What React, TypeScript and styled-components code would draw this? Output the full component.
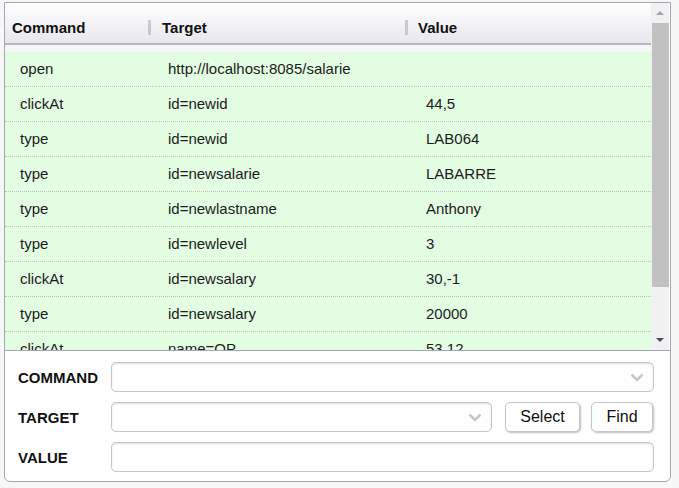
import React from "react";
import styled, { createGlobalStyle } from "styled-components";

const Global = createGlobalStyle`
  html, body { margin: 0; padding: 0; background: #f7f7f8; }
  body { font-family: "Liberation Sans", Arial, sans-serif; }
  * { box-sizing: border-box; }
`;

const Page = styled.div`
  padding: 2px 0 0 4px;
  width: 679px;
  height: 488px;
`;

const Panel = styled.div`
  width: 667px;
  height: 480px;
  background: #fff;
  border: 1px solid #a4a8b6;
  border-radius: 0 0 6px 6px;
  display: flex;
  flex-direction: column;
  overflow: hidden;
`;

const TableArea = styled.div`
  height: 348px;
  display: flex;
  border-bottom: 1px solid #a4a8b6;
  flex: none;
`;

const TableMain = styled.div`
  flex: 1;
  overflow: hidden;
  display: flex;
  flex-direction: column;
`;

const Header = styled.div`
  height: 42px;
  flex: none;
  display: flex;
  align-items: center;
  padding-top: 9px;
  background: linear-gradient(#ffffff, #e7e7ed);
  border-bottom: 2px solid #b5b8c4;
`;

const HeadCell = styled.div<{ $w?: number; $pad: number; $sep?: boolean }>`
  position: relative;
  width: ${(p) => (p.$w ? `${p.$w}px` : "auto")};
  flex: ${(p) => (p.$w ? "none" : "1")};
  padding-left: ${(p) => p.$pad}px;
  font-size: 15px;
  font-weight: bold;
  color: #111;
  line-height: 18px;
  ${(p) =>
    p.$sep
      ? `&::before { content: ""; position: absolute; left: 0; top: 1px; width: 3px; height: 15px; background: #cacaca; }`
      : ""}
`;

const Body = styled.div`
  padding-top: 7px;
  background: #f6f6f8;
  flex: 1;
`;

const Row = styled.div`
  display: flex;
  gap: 2px;
  background: #e3fde3;
  height: 35px;
`;

const Cell = styled.div<{ $w?: number; $pad: number }>`
  width: ${(p) => (p.$w ? `${p.$w}px` : "auto")};
  flex: ${(p) => (p.$w ? "none" : "1")};
  padding-left: ${(p) => p.$pad}px;
  padding-bottom: 1px;
  border-bottom: 1px dotted #bdbdbd;
  font-size: 15px;
  color: #1c1c1c;
  display: flex;
  align-items: center;
  white-space: nowrap;
`;

const Scrollbar = styled.div`
  width: 18px;
  flex: none;
  background: #f1f1f1;
  display: flex;
  flex-direction: column;
  align-items: center;
  margin-right: 1px;
`;

const Arrow = styled.div<{ $down?: boolean; $color: string }>`
  height: 20px;
  width: 100%;
  display: flex;
  align-items: center;
  justify-content: center;
  &::after {
    content: "";
    width: 0;
    height: 0;
    border-left: 4px solid transparent;
    border-right: 4px solid transparent;
    ${(p) =>
      p.$down
        ? `border-top: 4px solid ${p.$color};`
        : `border-bottom: 4px solid ${p.$color};`}
  }
`;

const Thumb = styled.div`
  width: 17px;
  height: 264px;
  background: #c1c1c1;
  margin-left: 1px;
`;

const Spacer = styled.div`
  flex: 1;
`;

const Form = styled.div`
  flex: 1;
  padding: 11px 16px 0 13px;
  display: flex;
  flex-direction: column;
  gap: 10px;
`;

const FormRow = styled.div`
  display: flex;
  align-items: center;
  height: 30px;
`;

const Label = styled.div`
  width: 93px;
  flex: none;
  font-size: 15px;
  font-weight: bold;
  color: #111;
`;

const Field = styled.div<{ $w?: number }>`
  position: relative;
  height: 30px;
  width: ${(p) => (p.$w ? `${p.$w}px` : "auto")};
  flex: ${(p) => (p.$w ? "none" : "1")};
  border: 1px solid #c6c6c6;
  border-radius: 5px;
  background: #fff;
  box-shadow: inset 0 1px 2px rgba(0, 0, 0, 0.14);
`;

const Chevron = styled.svg`
  position: absolute;
  right: 9px;
  top: 10px;
`;

const Button = styled.button<{ $w: number; $ml: number }>`
  width: ${(p) => p.$w}px;
  margin-left: ${(p) => p.$ml}px;
  height: 30px;
  flex: none;
  background: #fff;
  border: 1px solid #c6c6c6;
  border-radius: 5px;
  box-shadow: 1px 1px 2px rgba(0, 0, 0, 0.25);
  font-family: "Liberation Sans", Arial, sans-serif;
  font-size: 16px;
  color: #111;
  padding: 0;
`;

const rows: [string, string, string][] = [
  ["open", "http://localhost:8085/salarie", ""],
  ["clickAt", "id=newid", "44,5"],
  ["type", "id=newid", "LAB064"],
  ["type", "id=newsalarie", "LABARRE"],
  ["type", "id=newlastname", "Anthony"],
  ["type", "id=newlevel", "3"],
  ["clickAt", "id=newsalary", "30,-1"],
  ["type", "id=newsalary", "20000"],
  ["clickAt", "name=OP", "53,12"],
];

const ChevronIcon = () => (
  <Chevron width="14" height="9" viewBox="0 0 14 9">
    <path d="M1.5 1.5 L7 7 L12.5 1.5" fill="none" stroke="#c8c8c8" strokeWidth="2.6" />
  </Chevron>
);

export default function App() {
  return (
    <>
      <Global />
      <Page>
        <Panel>
          <TableArea>
            <TableMain>
              <Header>
                <HeadCell $w={143} $pad={7}>Command</HeadCell>
                <HeadCell $w={257} $pad={14} $sep>Target</HeadCell>
                <HeadCell $pad={13} $sep>Value</HeadCell>
              </Header>
              <Body>
                {rows.map((r, i) => (
                  <Row key={i}>
                    <Cell $w={148} $pad={15}>{r[0]}</Cell>
                    <Cell $w={255} $pad={13}>{r[1]}</Cell>
                    <Cell $pad={14}>{r[2]}</Cell>
                  </Row>
                ))}
              </Body>
            </TableMain>
            <Scrollbar>
              <Arrow $color="#a3a3a3" />
              <Thumb />
              <Spacer />
              <Arrow $down $color="#505050" />
            </Scrollbar>
          </TableArea>
          <Form>
            <FormRow>
              <Label>COMMAND</Label>
              <Field>
                <ChevronIcon />
              </Field>
            </FormRow>
            <FormRow>
              <Label>TARGET</Label>
              <Field $w={381}>
                <ChevronIcon />
              </Field>
              <Button $w={75} $ml={13}>Select</Button>
              <Button $w={62} $ml={11}>Find</Button>
            </FormRow>
            <FormRow>
              <Label>VALUE</Label>
              <Field />
            </FormRow>
          </Form>
        </Panel>
      </Page>
    </>
  );
}
